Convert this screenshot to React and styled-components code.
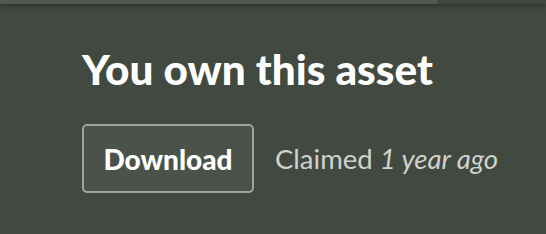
import React from "react";
import styled, { createGlobalStyle } from "styled-components";

const GlobalStyle = createGlobalStyle`
  html, body {
    margin: 0;
    padding: 0;
    background: #424940;
    font-family: "Lato", "Liberation Sans", sans-serif;
  }
`;

const Page = styled.div`
  width: 546px;
  height: 234px;
  overflow: hidden;
  background: #424940;
`;

const TopBar = styled.div`
  display: flex;
  height: 4px;
  box-shadow: 0 2px 5px rgba(0, 0, 0, 0.35);
  position: relative;
  z-index: 1;
`;

const BarPart = styled.div`
  height: 100%;
  flex: ${(p) => (p.grow ? 1 : "none")};
  width: ${(p) => (p.grow ? "auto" : "437px")};
  background: ${(p) => (p.light ? "#51584f" : "#424940")};
`;

const Content = styled.div`
  padding: 39px 0 0 82px;
`;

const Title = styled.h2`
  margin: 0;
  color: #ffffff;
  font-weight: 900;
  font-size: 42.3px;
  line-height: 52px;
`;

const Row = styled.div`
  display: flex;
  align-items: center;
  gap: 21px;
  margin-top: 29px;
`;

const Button = styled.button`
  width: 172px;
  height: 69px;
  background: #4b5249;
  border: 2px solid #9ea39c;
  border-radius: 5px;
  color: #ffffff;
  font-family: "Lato", "Liberation Sans", sans-serif;
  font-weight: 900;
  font-size: 28px;
  padding: 0;
`;

const Claimed = styled.span`
  color: #cfd2cd;
  font-size: 27.5px;

  em {
    font-style: italic;
  }
`;

export default function App() {
  return (
    <Page>
      <GlobalStyle />
      <TopBar>
        <BarPart light />
        <BarPart grow />
      </TopBar>
      <Content>
        <Title>You own this asset</Title>
        <Row>
          <Button type="button">Download</Button>
          <Claimed>
            Claimed <em>1 year ago</em>
          </Claimed>
        </Row>
      </Content>
    </Page>
  );
}
